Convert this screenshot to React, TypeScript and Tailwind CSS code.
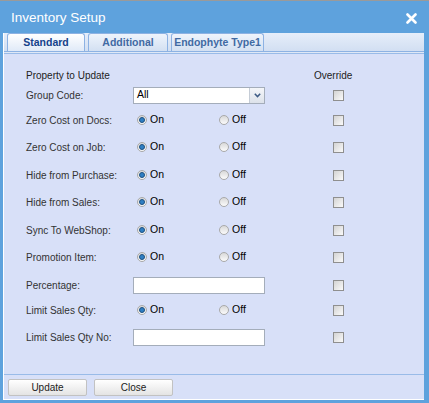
import React from 'react';

const rows: { label: string; kind: 'select' | 'radio' | 'text'; mt: string }[] = [
  { label: 'Group Code:', kind: 'select', mt: 'mt-[1px]' },
  { label: 'Zero Cost on Docs:', kind: 'radio', mt: 'mt-[7px]' },
  { label: 'Zero Cost on Job:', kind: 'radio', mt: 'mt-[9px]' },
  { label: 'Hide from Purchase:', kind: 'radio', mt: 'mt-[10px]' },
  { label: 'Hide from Sales:', kind: 'radio', mt: 'mt-[9px]' },
  { label: 'Sync To WebShop:', kind: 'radio', mt: 'mt-[10px]' },
  { label: 'Promotion Item:', kind: 'radio', mt: 'mt-[9px]' },
  { label: 'Percentage:', kind: 'text', mt: 'mt-[10px]' },
  { label: 'Limit Sales Qty:', kind: 'radio', mt: 'mt-[7px]' },
  { label: 'Limit Sales Qty No:', kind: 'text', mt: 'mt-[9px]' },
];

const Radio = ({ checked }: { checked?: boolean }) => (
  <span className="inline-flex w-[10px] h-[10px] rounded-full border border-[#a9a9a9] bg-gradient-to-b from-[#d9d9d9] to-[#fbfbfb] items-center justify-center">
    {checked && <span className="w-[6px] h-[6px] rounded-full bg-[#2f7fc4] border border-[#1d4f80]" />}
  </span>
);

const Checkbox = () => (
  <span className="block w-[11px] h-[11px] border border-[#8f8f8f] bg-gradient-to-br from-[#d4d4d4] to-[#fafafa]" />
);

const Tab = ({ label, active, w }: { label: string; active?: boolean; w: string }) => (
  <div
    className={`${w} h-[18px] mr-[3px] rounded-t-[3px] border border-b-0 border-[#8db2e3] flex items-center justify-center text-[10.5px] font-bold ${
      active ? 'bg-gradient-to-b from-white to-[#e0eaf8] text-[#15428b]' : 'bg-gradient-to-b from-[#eef4fc] to-[#d3e0f2] text-[#416aa3]'
    }`}
  >
    {label}
  </div>
);

export default function App() {
  return (
    <div
      className="w-[429px] h-[403px] bg-[#5ea2dd] border-t border-[#9a9a9a] flex flex-col text-[#333]"
      style={{ fontFamily: '"Liberation Sans", Arial, sans-serif' }}
    >
      {/* Title bar */}
      <div className="h-[32px] flex items-center justify-between pl-[11px] pr-[12px] text-white">
        <span className="text-[13.5px] pt-[2px]">Inventory Setup</span>
        <svg width="11" height="11" viewBox="0 0 11 11" className="mt-[2px]">
          <path d="M1.5 1.5 L9.5 9.5 M9.5 1.5 L1.5 9.5" stroke="#fff" strokeWidth="2.6" strokeLinecap="round" />
        </svg>
      </div>

      <div className="flex-1 ml-[3px] mr-[5px] mb-[3px] flex flex-col bg-[#d8e0f8] border-l border-b border-white">
        {/* Tabs */}
        <div className="h-[19px] pt-[1px] pl-[3px] flex items-end bg-gradient-to-b from-[#e6eefa] to-[#d2dff2] border-b border-[#8db2e3]">
          <Tab label="Standard" active w="w-[78px]" />
          <Tab label="Additional" w="w-[80px]" />
          <Tab label="Endophyte Type1" w="w-[93px]" />
        </div>
        <div className="h-[2px] bg-[#dfe8f6] border-b border-[#99bbe8]" />

        {/* Form */}
        <div className="flex-1 pt-[12px] pl-[22px] text-[10px]">
          <div className="flex items-center h-[18px]">
            <span className="w-[288px] text-[#222]">Property to Update</span>
            <span className="text-[#222]">Override</span>
          </div>
          {rows.map((r, i) => (
            <div key={r.label} className={`flex items-center h-[18px] ${i === 0 ? 'mt-[2px]' : r.mt}`}>
              <span className="w-[107px]">{r.label}</span>
              <div className="w-[200px] flex items-center">
                {r.kind === 'select' && (
                  <div className="w-[132px] h-[17px] bg-white border border-[#a4adba] flex items-center">
                    <span className="flex-1 pl-[3px] text-[10.5px] text-black">All</span>
                    <span className="w-[15px] h-full border-l border-[#c5ccd6] bg-gradient-to-b from-[#f4f6f9] to-[#dde2ea] flex items-center justify-center">
                      <svg width="7" height="5" viewBox="0 0 7 5">
                        <path d="M0.8 0.8 L3.5 3.6 L6.2 0.8" fill="none" stroke="#3d5b85" strokeWidth="1.5" />
                      </svg>
                    </span>
                  </div>
                )}
                {r.kind === 'text' && <div className="w-[132px] h-[17px] bg-white border border-[#a4adba]" />}
                {r.kind === 'radio' && (
                  <div className="flex items-center pl-[4px] text-[10.5px] text-black">
                    <span className="w-[82px] flex items-center gap-[3px]">
                      <Radio checked />
                      On
                    </span>
                    <span className="flex items-center gap-[3px]">
                      <Radio />
                      Off
                    </span>
                  </div>
                )}
              </div>
              <Checkbox />
            </div>
          ))}
        </div>

        {/* Footer */}
        <div className="h-[25px] border-t border-[#99bbe8] pl-[4px] pt-[4px] flex gap-[7px]">
          {['Update', 'Close'].map((b) => (
            <button
              key={b}
              className="w-[79px] h-[17px] rounded-[2px] border border-[#c2c2c2] bg-gradient-to-b from-white to-[#e4e4e4] text-[10px] text-[#222]"
            >
              {b}
            </button>
          ))}
        </div>
      </div>
    </div>
  );
}
